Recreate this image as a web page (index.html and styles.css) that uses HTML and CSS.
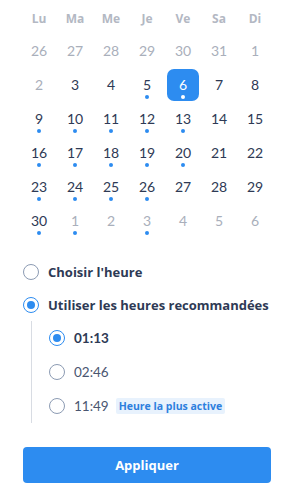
FILE: index.html
```html
<!DOCTYPE html>
<html lang="fr">
<head>
    <meta charset="UTF-8">
    <meta name="viewport" content="width=device-width, initial-scale=1.0">
    <title>Calendrier</title>
    <link rel="stylesheet" href="styles.css">
</head>
<body>
    <div class="panel">
        <div class="weekdays">
            <div>Lu</div><div>Ma</div><div>Me</div><div>Je</div><div>Ve</div><div>Sa</div><div>Di</div>
        </div>
        <div class="days">
            <div class="day muted">26</div>
            <div class="day muted">27</div>
            <div class="day muted">28</div>
            <div class="day muted">29</div>
            <div class="day muted">30</div>
            <div class="day muted">31</div>
            <div class="day muted">1</div>

            <div class="day muted">2</div>
            <div class="day">3</div>
            <div class="day">4</div>
            <div class="day dot">5</div>
            <div class="day dot selected">6</div>
            <div class="day">7</div>
            <div class="day">8</div>

            <div class="day dot">9</div>
            <div class="day dot">10</div>
            <div class="day dot">11</div>
            <div class="day dot">12</div>
            <div class="day dot">13</div>
            <div class="day">14</div>
            <div class="day">15</div>

            <div class="day dot">16</div>
            <div class="day dot">17</div>
            <div class="day dot">18</div>
            <div class="day dot">19</div>
            <div class="day dot">20</div>
            <div class="day">21</div>
            <div class="day">22</div>

            <div class="day dot">23</div>
            <div class="day dot">24</div>
            <div class="day dot">25</div>
            <div class="day dot">26</div>
            <div class="day">27</div>
            <div class="day">28</div>
            <div class="day">29</div>

            <div class="day dot">30</div>
            <div class="day muted dot">1</div>
            <div class="day muted">2</div>
            <div class="day muted dot">3</div>
            <div class="day muted">4</div>
            <div class="day muted">5</div>
            <div class="day muted">6</div>
        </div>

        <div class="options">
            <div class="option">
                <span class="radio"></span>
                <span class="label">Choisir l'heure</span>
            </div>
            <div class="option">
                <span class="radio checked"></span>
                <span class="label">Utiliser les heures recommandées</span>
            </div>
            <div class="sub-list">
                <div class="option sub">
                    <span class="radio checked"></span>
                    <span class="time active">01:13</span>
                </div>
                <div class="option sub">
                    <span class="radio"></span>
                    <span class="time">02:46</span>
                </div>
                <div class="option sub">
                    <span class="radio"></span>
                    <span class="time">11:49</span>
                    <span class="badge">Heure la plus active</span>
                </div>
            </div>
        </div>

        <button class="apply">Appliquer</button>
    </div>
</body>
</html>
```

FILE: styles.css
```css
body {
    margin: 0;
    background: #ffffff;
    font-family: Lato, "Open Sans", sans-serif;
    color: #2e3a55;
}
.panel {
    padding: 4px 23px 0 23px;
}
.weekdays {
    display: grid;
    grid-template-columns: repeat(7, 1fr);
    height: 30px;
    line-height: 30px;
    margin: 0 -2px;
    text-align: center;
    font-family: "Open Sans", sans-serif;
    font-size: 12px;
    font-weight: bold;
    color: #b3b8c3;
}
.days {
    display: grid;
    grid-template-columns: repeat(7, 1fr);
    grid-auto-rows: 34px;
    margin: 0 -2px;
}
.day {
    position: relative;
    width: 32px;
    height: 32px;
    margin: 1px auto;
    line-height: 32px;
    text-align: center;
    font-size: 14px;
    color: #2e3a55;
    border-radius: 7px;
}
.day.muted {
    color: #a9afbb;
}
.day.dot::after {
    content: "";
    position: absolute;
    left: 14px;
    top: 26px;
    width: 4px;
    height: 4px;
    border-radius: 50%;
    background: #2d8cf0;
}
.day.selected {
    background: #2d8cf0;
    color: #ffffff;
}
.day.selected::after {
    background: #ffffff;
}
.options {
    margin-top: 17px;
}
.option {
    display: flex;
    align-items: center;
    height: 33px;
}
.option.sub {
    height: 34px;
}
.radio {
    box-sizing: border-box;
    width: 16px;
    height: 16px;
    border: 1.5px solid #8c9bb3;
    border-radius: 50%;
    margin-right: 9px;
    display: flex;
    align-items: center;
    justify-content: center;
    flex-shrink: 0;
}
.radio.checked {
    border-color: #2d8cf0;
}
.radio.checked::after {
    content: "";
    width: 8px;
    height: 8px;
    border-radius: 50%;
    background: #2d8cf0;
}
.label {
    font-family: "Open Sans", sans-serif;
    font-size: 13px;
    font-weight: bold;
    color: #2e3a55;
}
.sub-list {
    margin-left: 8px;
    padding-left: 17px;
    border-left: 1px solid #d8dce3;
}
.time {
    font-size: 13.5px;
    color: #4a5670;
}
.time.active {
    font-weight: bold;
    color: #2e3a55;
}
.badge {
    margin-left: 7px;
    padding: 1px 3px;
    background: #e8f2fd;
    color: #2d7fde;
    font-family: "Open Sans", sans-serif;
    font-size: 10.5px;
    font-weight: bold;
    border-radius: 2px;
}
.apply {
    display: block;
    width: 100%;
    height: 36px;
    margin-top: 24px;
    border: none;
    border-radius: 4px;
    background: #2d8cf0;
    color: #ffffff;
    font-family: "Open Sans", sans-serif;
    font-size: 13px;
    font-weight: bold;
    cursor: pointer;
}
```
